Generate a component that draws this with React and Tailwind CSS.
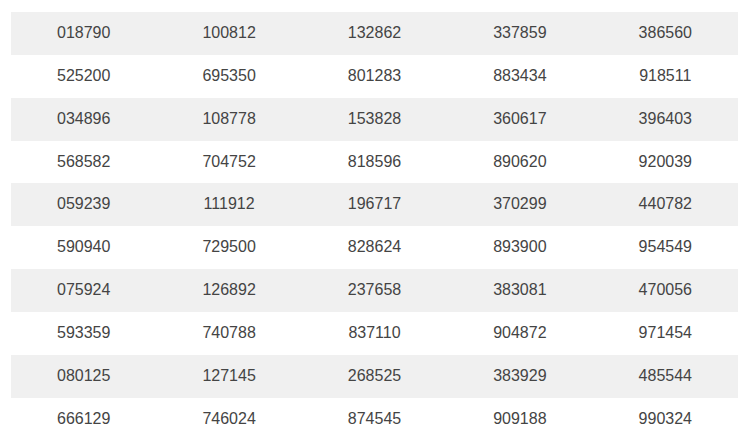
const ROWS = [
  ['018790', '100812', '132862', '337859', '386560'],
  ['525200', '695350', '801283', '883434', '918511'],
  ['034896', '108778', '153828', '360617', '396403'],
  ['568582', '704752', '818596', '890620', '920039'],
  ['059239', '111912', '196717', '370299', '440782'],
  ['590940', '729500', '828624', '893900', '954549'],
  ['075924', '126892', '237658', '383081', '470056'],
  ['593359', '740788', '837110', '904872', '971454'],
  ['080125', '127145', '268525', '383929', '485544'],
  ['666129', '746024', '874545', '909188', '990324'],
]

export default function App() {
  return (
    <div className="min-h-screen bg-white px-[11px] pt-[12px] font-['Liberation_Sans',Arial,sans-serif] text-[16px] text-[#444]">
      <table className="w-[727px] table-fixed border-collapse">
        <tbody>
          {ROWS.map((row, i) => (
            <tr key={i} className={i % 2 === 0 ? 'bg-[#f0f0f0]' : 'bg-white'}>
              {row.map((cell) => (
                <td key={cell} className="py-[10px] text-center leading-[22.86px]">
                  {cell}
                </td>
              ))}
            </tr>
          ))}
        </tbody>
      </table>
    </div>
  )
}
